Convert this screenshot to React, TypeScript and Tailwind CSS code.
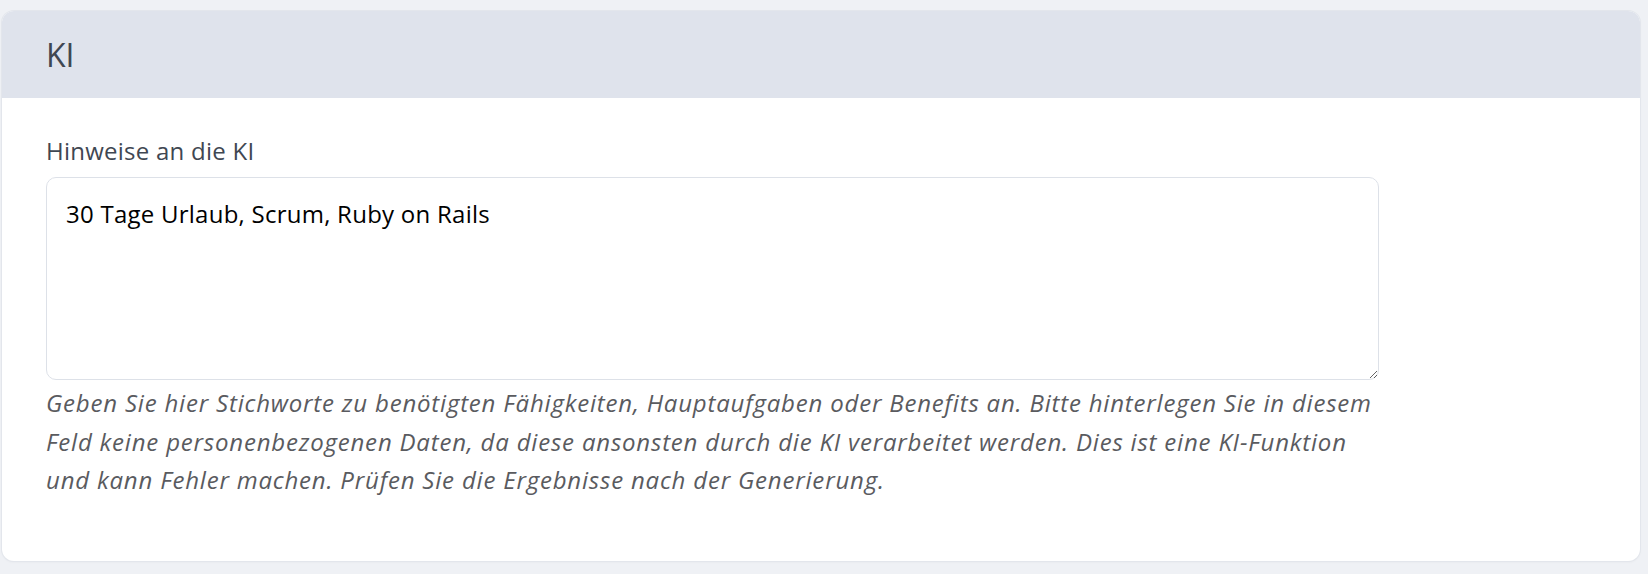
export default function App() {
  return (
    <div className="min-h-[574px] bg-[#eff1f5] pl-[2px] pr-[8px] pt-[11px] pb-[15px] font-['Open_Sans',sans-serif]">
      <div className="overflow-hidden rounded-[12px] bg-white shadow-[0_0_0_1px_#e3e6ec,0_1px_3px_rgba(0,0,0,0.05)]">
        <div className="flex h-[87px] items-center bg-[#dfe3ec] px-[44px]">
          <h2 className="text-[32px] font-normal leading-none text-[#3f4752]">KI</h2>
        </div>

        <div className="px-[44px] pt-[37px] pb-[61px]">
          <label className="block text-[24px] leading-[32px] tracking-[0.25px] text-[#3f4752]">Hinweise an die KI</label>

          <div className="relative mt-[10px] w-[1333px]">
            <textarea
              className="block h-[203px] w-full resize-y rounded-[10px] border border-[#dde1e8] bg-white px-[19px] py-[20px] text-[24px] leading-[32px] tracking-[0.25px] text-black outline-none"
              defaultValue="30 Tage Urlaub, Scrum, Ruby on Rails"
            />
          </div>

          <p className="mt-[4px] text-[24px] italic leading-[38.5px] tracking-[0.8px] text-[#5a5b5f]">
            Geben Sie hier Stichworte zu benötigten Fähigkeiten, Hauptaufgaben oder Benefits an. Bitte hinterlegen Sie in diesem
            <br />
            Feld keine personenbezogenen Daten, da diese ansonsten durch die KI verarbeitet werden. Dies ist eine KI-Funktion
            <br />
            und kann Fehler machen. Prüfen Sie die Ergebnisse nach der Generierung.
          </p>
        </div>
      </div>
    </div>
  );
}
